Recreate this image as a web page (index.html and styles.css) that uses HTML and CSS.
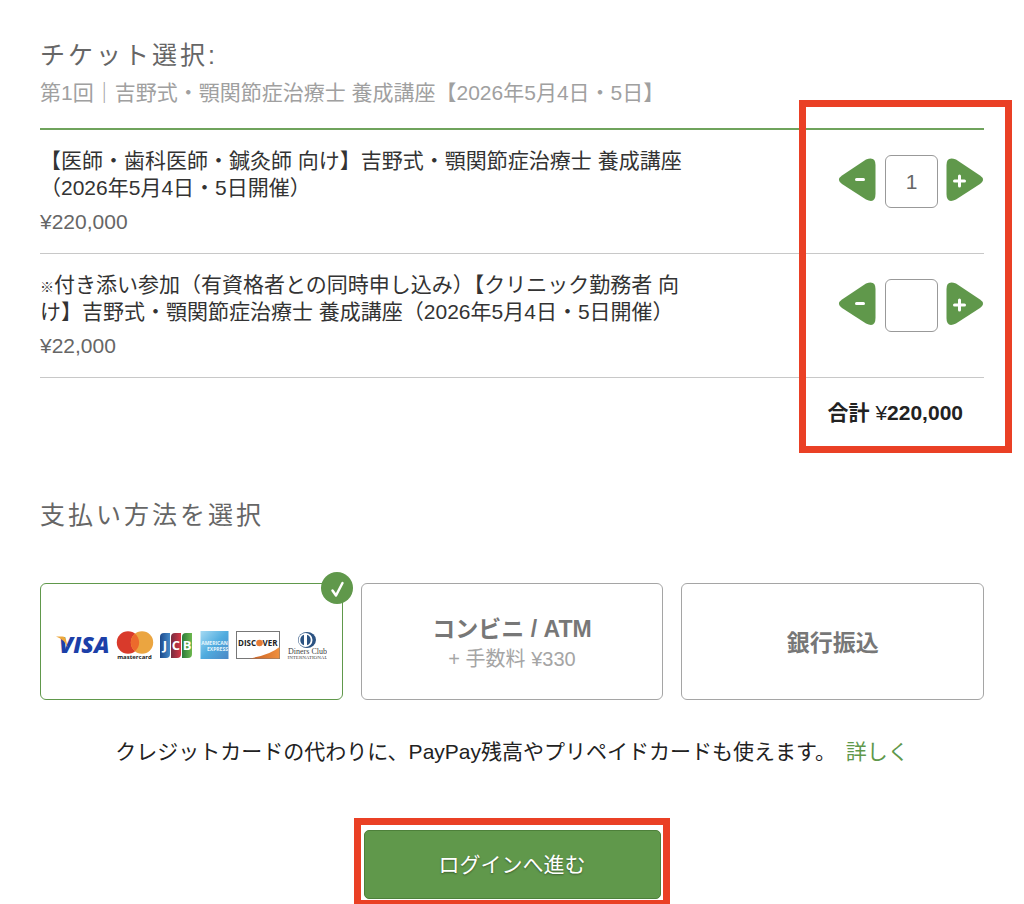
FILE: index.html
```
<!DOCTYPE html>
<html lang="ja">
<head>
  <meta charset="UTF-8">
  <meta name="viewport" content="width=device-width, initial-scale=1">
  <title>チケット選択</title>
  <link rel="stylesheet" href="styles.css">
</head>
<body>
  <form class="page">
    <h1>チケット選択:</h1>
    <p class="event-name">第1回｜吉野式・顎関節症治療士 養成講座【2026年5月4日・5日】</p>

    <section class="tickets">
      <div class="ticket">
        <div class="ticket-info">
          <label for="qty-1">【医師・歯科医師・鍼灸師 向け】吉野式・顎関節症治療士 養成講座（2026年5月4日・5日開催）</label>
          <div class="price">¥220,000</div>
        </div>
        <div class="quantity">
          <button type="button" class="step" aria-label="減らす">
            <svg width="37" height="44" viewBox="0 0 37 44">
              <path d="M3 17.500 L27 1.500 Q36.500 -2 36.500 7 V36 Q36.500 46 27 41.500 L3 26 Q-3 21.500 3 17.500Z" fill="#60984b"/>
              <path d="M17.500 21.500h7" stroke="#fff" stroke-width="3" stroke-linecap="round"/>
            </svg>
          </button>
          <input type="text" id="qty-1" value="1">
          <button type="button" class="step" aria-label="増やす">
            <svg width="37" height="44" viewBox="0 0 37 44">
              <path d="M33 17.500 L9 1.500 Q-.500 -2 -.500 7 V36 Q-.500 46 9 41.500 L33 26 Q39 21.500 33 17.500Z" fill="#60984b"/>
              <path d="M7.500 23h10M12.500 18v10" stroke="#fff" stroke-width="3" stroke-linecap="round"/>
            </svg>
          </button>
        </div>
      </div>

      <div class="ticket">
        <div class="ticket-info">
          <label for="qty-2"><span class="mark">※</span>付き添い参加（有資格者との同時申し込み）【クリニック勤務者 向け】吉野式・顎関節症治療士 養成講座（2026年5月4日・5日開催）</label>
          <div class="price">¥22,000</div>
        </div>
        <div class="quantity">
          <button type="button" class="step" aria-label="減らす">
            <svg width="37" height="44" viewBox="0 0 37 44">
              <path d="M3 17.500 L27 1.500 Q36.500 -2 36.500 7 V36 Q36.500 46 27 41.500 L3 26 Q-3 21.500 3 17.500Z" fill="#60984b"/>
              <path d="M17.500 21.500h7" stroke="#fff" stroke-width="3" stroke-linecap="round"/>
            </svg>
          </button>
          <input type="text" id="qty-2" value="">
          <button type="button" class="step" aria-label="増やす">
            <svg width="37" height="44" viewBox="0 0 37 44">
              <path d="M33 17.500 L9 1.500 Q-.500 -2 -.500 7 V36 Q-.500 46 9 41.500 L33 26 Q39 21.500 33 17.500Z" fill="#60984b"/>
              <path d="M7.500 23h10M12.500 18v10" stroke="#fff" stroke-width="3" stroke-linecap="round"/>
            </svg>
          </button>
        </div>
      </div>

      <div class="total">合計 <span class="yen">¥</span>220,000</div>
      <div class="highlight highlight-tickets"></div>
    </section>

    <h2>支払い方法を選択</h2>

    <div class="methods">
      <label class="method">
        <input type="radio" name="method" value="card" aria-label="クレジットカード" checked>
        <svg class="brands" width="271" height="36" viewBox="0 0 271 36">
          <defs>
            <linearGradient id="jcb-blue"><stop offset="0" stop-color="#1d4a8c"/><stop offset="1" stop-color="#4489c8"/></linearGradient>
            <linearGradient id="jcb-red"><stop offset="0" stop-color="#752d40"/><stop offset="1" stop-color="#d73545"/></linearGradient>
            <linearGradient id="jcb-green"><stop offset="0" stop-color="#2d7a3c"/><stop offset="1" stop-color="#6cb84d"/></linearGradient>
            <linearGradient id="amex" x1="0" y1="0" x2="1" y2="1"><stop offset="0" stop-color="#a5daf3"/><stop offset=".5" stop-color="#50acdf"/><stop offset="1" stop-color="#4a87c5"/></linearGradient>
            <linearGradient id="orange"><stop offset="0" stop-color="#c75b20"/><stop offset="1" stop-color="#ef913f"/></linearGradient>
          </defs>
          <!-- Visa -->
          <text x="3" y="28" class="visa">VISA</text>
          <path d="M0 11.500h6.500q3 0 3.500 3l1.500 8Q8 14 0 11.500Z" fill="#eda83c"/>
          <!-- Mastercard -->
          <circle cx="72" cy="17.500" r="11.200" fill="#d93a2b"/>
          <circle cx="86" cy="17.500" r="11.200" fill="#eba540"/>
          <path d="M79 8.800a11.200 11.200 0 0 1 0 17.400a11.200 11.200 0 0 1 0-17.400Z" fill="#ec6a2c"/>
          <text x="78.500" y="34" class="mastercard">mastercard</text>
          <!-- JCB -->
          <path d="M108 8h6v21q0 4-4 4h-6V12q0-4 4-4Z" fill="url(#jcb-blue)"/>
          <path d="M119 8h6v21q0 4-4 4h-6V12q0-4 4-4Z" fill="url(#jcb-red)"/>
          <path d="M130 8h6v21q0 4-4 4h-6V12q0-4 4-4Z" fill="url(#jcb-green)"/>
          <g class="jcb">
            <text x="109" y="25">J</text>
            <text x="120" y="25">C</text>
            <text x="131" y="25">B</text>
          </g>
          <!-- American Express -->
          <rect x="144.500" y="6" width="28" height="28" fill="url(#amex)"/>
          <text x="158.500" y="20" class="amex">AMERICAN</text>
          <text x="161.500" y="26" class="amex">EXPRESS</text>
          <!-- Discover -->
          <rect x="180.500" y="6.500" width="43" height="27" fill="#fff" stroke="#777"/>
          <path d="M193 33.500Q214 30 223.500 22v11.500Z" fill="url(#orange)"/>
          <text x="182" y="21" class="discover">DISC</text>
          <circle cx="203.500" cy="18" r="3.300" fill="#e57b35"/>
          <text x="206.500" y="21" class="discover">VER</text>
          <!-- Diners Club -->
          <ellipse cx="251" cy="15" rx="9" ry="8" fill="#2c5382"/>
          <circle cx="249.500" cy="15" r="7" fill="#fff"/>
          <path d="M248 9.800v10.400a5.500 5.500 0 0 1 0-10.400ZM251 9.800v10.400a5.500 5.500 0 0 0 0-10.400Z" fill="#2c5382"/>
          <text x="251.500" y="29" class="diners">Diners Club</text>
          <text x="251.500" y="34" class="diners-sub">INTERNATIONAL</text>
        </svg>
        <span class="check">
          <svg width="32" height="32" viewBox="0 0 32 32">
            <path d="M11.500 18.500l3.500 5L21.500 11" fill="none" stroke="#fff" stroke-width="2.500" stroke-linecap="round" stroke-linejoin="round"/>
          </svg>
        </span>
      </label>
      <label class="method">
        <input type="radio" name="method" value="store">
        <span class="method-name">コンビニ / ATM</span>
        <span class="fee">+ 手数料 ¥330</span>
      </label>
      <label class="method">
        <input type="radio" name="method" value="bank">
        <span class="method-name">銀行振込</span>
      </label>
    </div>

    <p class="note">クレジットカードの代わりに、PayPay残高やプリペイドカードも使えます。 <a href="#">詳しく</a></p>

    <div class="submit">
      <button type="submit" class="login">ログインへ進む</button>
      <div class="highlight highlight-login"></div>
    </div>
  </form>
</body>
</html>
```
FILE: styles.css
```
* {
  box-sizing: border-box;
}

body {
  margin: 0;
  background: #fff;
  color: #333;
  font-family: "Liberation Sans", "Noto Sans CJK JP", sans-serif;
  font-size: 21px;
  line-height: 28px;
}

.page {
  padding: 37px 40px 5px;
  overflow: hidden;
}

h1, h2 {
  margin: 0;
  color: #666;
  font-size: 25px;
  font-weight: normal;
  line-height: 36px;
  letter-spacing: 3px;
}

.event-name {
  margin: 6px 0 21px;
  color: #a0a0a0;
}

/* Tickets */
.tickets {
  position: relative;
  border-top: 2px solid #6fa35c;
}

.ticket {
  display: flex;
  justify-content: space-between;
  padding: 17px 0;
  border-bottom: 1px solid #c8c8c8;
}

.ticket-info {
  max-width: 656px;
}

.ticket-info label {
  display: block;
  margin-bottom: 7px;
  line-height: 27px;
}

.mark {
  font-size: 14px;
  font-weight: bold;
  line-height: 1;
}

.price {
  color: #666;
}

.quantity {
  display: flex;
  gap: 9px;
  padding-top: 8px;
}

.quantity input {
  width: 53px;
  height: 53px;
  padding: 0;
  border: 1px solid #999;
  border-radius: 6px;
  background: #fff;
  color: #666;
  font: inherit;
  text-align: center;
}

.step {
  height: 44px;
  margin-top: 3px;
  padding: 0;
  border: 0;
  background: none;
  cursor: pointer;
}

.step svg {
  display: block;
  overflow: visible;
}

.total {
  padding: 21px 21px 0 0;
  color: #222;
  font-weight: bold;
  text-align: right;
}

.yen {
  font-weight: normal;
}

/* Payment methods */
h2 {
  margin: 70px 0 50px;
}

.methods {
  display: grid;
  grid-template-columns: repeat(3, 1fr);
  gap: 18px;
}

.method {
  position: relative;
  display: flex;
  flex-direction: column;
  align-items: center;
  justify-content: center;
  min-height: 117px;
  padding-top: 3px;
  border: 1px solid #a5a5a5;
  border-radius: 6px;
  cursor: pointer;
}

.method input {
  position: absolute;
  opacity: 0;
}

.method:has(input:checked) {
  border-color: #60984b;
}

.method-name {
  color: #777;
  font-size: 23px;
  font-weight: bold;
  line-height: 32px;
}

.fee {
  color: #a5a5a5;
  font-size: 20px;
}

.check {
  position: absolute;
  top: -12px;
  right: -11px;
  width: 32px;
  height: 32px;
  border-radius: 50%;
  background: #60984b;
}

.check svg {
  display: block;
}

.brands text {
  font-family: "Open Sans", sans-serif;
  font-weight: bold;
}

.brands .visa {
  fill: #1c3fa8;
  font-size: 23px;
  font-style: italic;
  font-weight: 800;
}

.brands .mastercard {
  fill: #222;
  font-size: 6px;
  text-anchor: middle;
}

.jcb text {
  fill: #fff;
  font-size: 13px;
  text-anchor: middle;
}

.brands .amex {
  fill: #e8f6fd;
  font-size: 5px;
  text-anchor: middle;
}

.brands .discover {
  fill: #222;
  font-size: 8px;
}

.brands .diners {
  fill: #444;
  font-family: "Liberation Serif", serif;
  font-size: 8px;
  font-weight: normal;
  text-anchor: middle;
}

.brands .diners-sub {
  fill: #444;
  font-family: "Liberation Serif", serif;
  font-size: 5px;
  font-weight: normal;
  text-anchor: middle;
}

.note {
  margin: 38px 0 64px;
  color: #222;
  text-align: center;
}

.note a {
  margin-left: 4px;
  color: #60984b;
  text-decoration: none;
}

.submit {
  position: relative;
  width: 297px;
  margin: 0 auto;
}

.login {
  display: block;
  width: 100%;
  height: 69px;
  border: 1px solid #4d803a;
  border-radius: 5px;
  background: #60984b;
  color: #fff;
  font: inherit;
  text-shadow: 0 1px 2px rgba(0, 0, 0, 0.4);
  cursor: pointer;
}

/* Red frames around the steps to fill in */
.highlight {
  position: absolute;
  border: 7px solid #ea4025;
  pointer-events: none;
}

.highlight-tickets {
  top: -30px;
  right: -28px;
  bottom: -26px;
  width: 213px;
}

.highlight-login {
  top: -12px;
  right: -9px;
  bottom: -8px;
  left: -10px;
}
```
